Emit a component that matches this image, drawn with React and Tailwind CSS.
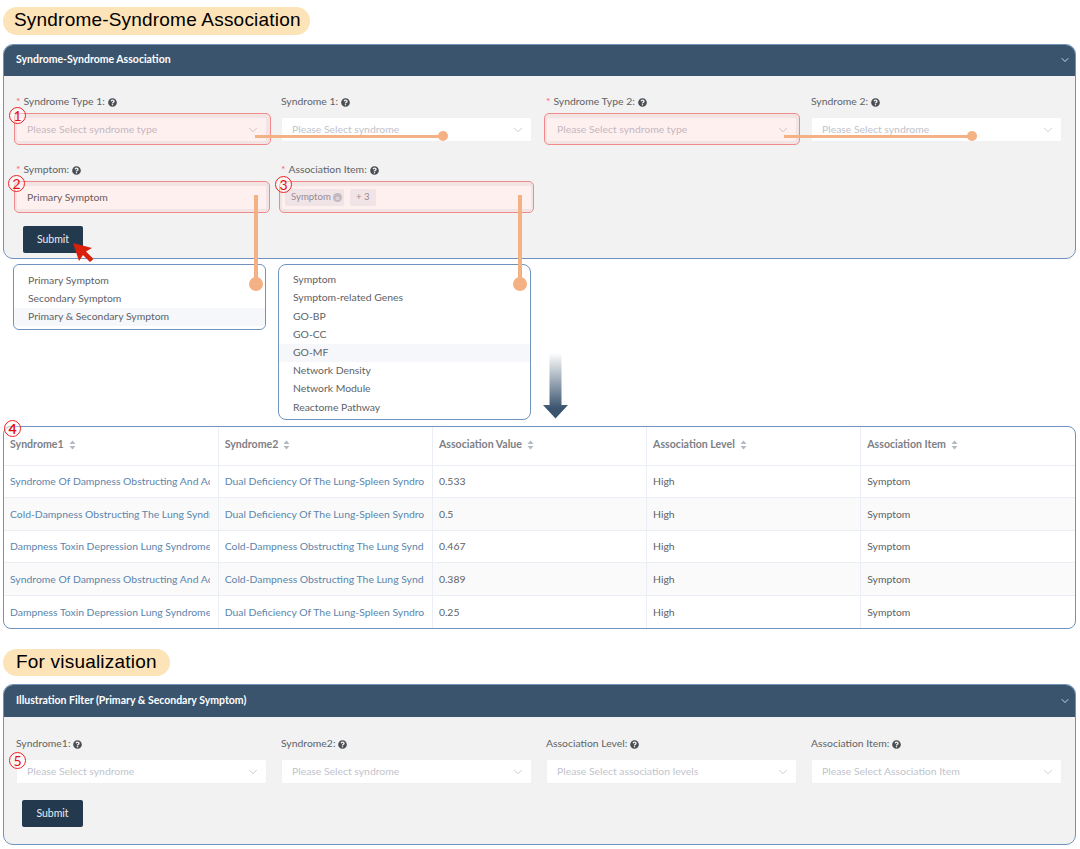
import { ChevronDown } from "lucide-react";
import { FaQuestionCircle } from "react-icons/fa";

const rows = [
  ["Syndrome Of Dampness Obstructing And Accumulating", "Dual Deficiency Of The Lung-Spleen Syndrome", "0.533"],
  ["Cold-Dampness Obstructing The Lung Syndrome", "Dual Deficiency Of The Lung-Spleen Syndrome", "0.5"],
  ["Dampness Toxin Depression Lung Syndrome", "Cold-Dampness Obstructing The Lung Syndrome", "0.467"],
  ["Syndrome Of Dampness Obstructing And Accumulating", "Cold-Dampness Obstructing The Lung Syndrome", "0.389"],
  ["Dampness Toxin Depression Lung Syndrome", "Dual Deficiency Of The Lung-Spleen Syndrome", "0.25"],
];

const columns = ["Syndrome1", "Syndrome2", "Association Value", "Association Level", "Association Item"];
const symptomOptions = ["Primary Symptom", "Secondary Symptom", "Primary & Secondary Symptom"];
const itemOptions = [
  "Symptom",
  "Symptom-related Genes",
  "GO-BP",
  "GO-CC",
  "GO-MF",
  "Network Density",
  "Network Module",
  "Reactome Pathway",
];

function SortIcon() {
  return (
    <svg width="7" height="10" viewBox="0 0 7 10" className="ml-[5px] shrink-0" fill="#b4b8bf">
      <path d="M3.5 0.5 L6.5 4 L0.5 4 Z" />
      <path d="M3.5 9.5 L6.5 6 L0.5 6 Z" />
    </svg>
  );
}

function Field({ label, required, children }) {
  return (
    <div className="flex flex-col">
      <div className="flex h-[16px] items-center text-[10.4px] text-[#606266]">
        {required && <span className="mr-[3px] text-[#f56c6c]">*</span>}
        <span>{label}:</span>
        <FaQuestionCircle className="ml-[3px] text-[9px] text-[#4a4d52]" />
      </div>
      <div className="mt-[7px]">{children}</div>
    </div>
  );
}

function Select({ placeholder, value, children }) {
  return (
    <div className="flex h-[25px] items-center justify-between rounded-[2px] border border-[#f0f1f4] bg-white pl-[10px] pr-[6px] text-[10.4px]">
      {children ? (
        <div className="flex items-center">{children}</div>
      ) : value ? (
        <span className="text-[#606266]">{value}</span>
      ) : (
        <span className="text-[#c0c4cc]">{placeholder}</span>
      )}
      {!children && !value && <ChevronDown size={14} strokeWidth={1} className="text-[#a8abb2]" />}
    </div>
  );
}

function Panel({ title, headerClass, children, className }) {
  return (
    <section className={`overflow-hidden rounded-[10px] border border-[#6f93bd] bg-[#f2f2f2] ${className}`}>
      <header className={`flex items-center justify-between bg-[#3a546e] pl-[12px] pr-[4px] text-[10.5px] font-bold text-white ${headerClass}`}>
        <span>{title}</span>
        <ChevronDown size={12} strokeWidth={1.5} className="text-white" />
      </header>
      {children}
    </section>
  );
}

function Submit({ className }) {
  return (
    <button className={`flex items-center justify-center rounded-[2px] bg-[#233a4e] text-[10.5px] text-[#e8edf2] ${className}`}>
      Submit
    </button>
  );
}

function Highlight({ className }) {
  return <div className={`absolute h-[32px] rounded-[5px] border border-[#f08a8a] bg-[#ff0000]/[0.06] ${className}`} />;
}

function Num({ n, className }) {
  return (
    <span className={`absolute flex h-[17px] w-[17px] items-center justify-center rounded-full border border-[#f02020] bg-white/40 text-[14px] leading-none text-[#e01010] ${className}`}>
      {n}
    </span>
  );
}

function Dot({ className }) {
  return <span className={`absolute rounded-full bg-[#f4b183] ${className}`} />;
}

export default function App() {
  return (
    <div className="relative h-[849px] w-[1080px] overflow-hidden bg-white pl-[3px] pr-[4px] pt-[7px] font-['Lato','Noto_Sans',sans-serif]">
      <h1 className="flex h-[28px] w-[307px] items-center whitespace-nowrap rounded-full bg-[#fde3b8] pb-[2px] pl-[11px] font-['Liberation_Sans',sans-serif] text-[19px] font-normal tracking-[0.2px] text-black">
        Syndrome-Syndrome Association
      </h1>

      <Panel title="Syndrome-Syndrome Association" headerClass="h-[31px] pb-[2px]" className="mt-[9px] h-[215px]">
        <div className="pl-[12px] pr-[13px] pt-[18px]">
          <div className="grid grid-cols-4 gap-x-[14px] gap-y-[20px]">
            <Field label="Syndrome Type 1" required><Select placeholder="Please Select syndrome type" /></Field>
            <Field label="Syndrome 1"><Select placeholder="Please Select syndrome" /></Field>
            <Field label="Syndrome Type 2" required><Select placeholder="Please Select syndrome type" /></Field>
            <Field label="Syndrome 2"><Select placeholder="Please Select syndrome" /></Field>
            <Field label="Symptom" required><Select value="Primary Symptom" /></Field>
            <Field label="Association Item" required>
              <Select>
                <span className="-ml-[7px] flex h-[17px] w-[59px] items-center justify-between rounded-[2px] bg-[#f0f2f5] pl-[6px] pr-[1px] text-[9.6px] text-[#909399]">
                  Symptom
                  <span className="mr-[1px] flex h-[9px] w-[9px] items-center justify-center rounded-full bg-[#c0c4cc] text-[8px] leading-none text-white">×</span>
                </span>
                <span className="ml-[6px] flex h-[17px] items-center rounded-[2px] bg-[#f0f2f5] px-[6px] text-[9.6px] text-[#909399]">+ 3</span>
              </Select>
            </Field>
          </div>
          <Submit className="ml-[7px] mt-[16px] h-[27px] w-[60px]" />
        </div>
      </Panel>

      <div className="mt-[5px] flex h-[156px] items-start gap-[12px] pl-[10px]">
        <ul className="h-[66px] w-[253px] overflow-hidden rounded-[6px] border border-[#6f93bd] bg-white pb-[3px] pt-[7px] text-[10.4px] text-[#606266]">
          {symptomOptions.map((o, i) => (
            <li key={o} className={`flex h-[18px] items-center pl-[14px] ${i === 2 ? "bg-[#f5f7fa]" : ""}`}>{o}</li>
          ))}
        </ul>
        <ul className="h-[156px] w-[253px] overflow-hidden rounded-[8px] border border-[#6f93bd] bg-white pb-[6px] pt-[6px] text-[10.4px] text-[#606266]">
          {itemOptions.map((o, i) => (
            <li key={o} className={`flex h-[18.2px] items-center pl-[14px] ${i === 4 ? "bg-[#f5f7fa]" : ""}`}>{o}</li>
          ))}
        </ul>
      </div>

      <div className="mt-[6px] h-[203px] overflow-hidden rounded-[8px] border border-[#6f93bd] bg-white">
        <table className="w-full table-fixed border-collapse text-[10.4px] text-[#606266]">
          <thead>
            <tr className="h-[38px] border-b border-[#ebeef5]">
              {columns.map((c) => (
                <th key={c} className="border-r border-[#ebeef5] px-[6px] pb-[2px] text-left text-[10.6px] font-bold text-[#7d8086] last:border-r-0">
                  <span className="flex items-center">{c}<SortIcon /></span>
                </th>
              ))}
            </tr>
          </thead>
          <tbody>
            {rows.map((r, i) => (
              <tr key={i} className={`h-[32.6px] border-b border-[#ebeef5] last:border-b-0 ${i % 2 === 1 ? "bg-[#fafafa]" : ""}`}>
                <td className="border-r border-[#ebeef5] pl-[6px] pr-[8px] pt-[1px] text-[#5b85ad]"><div className="overflow-hidden whitespace-nowrap">{r[0]}</div></td>
                <td className="border-r border-[#ebeef5] pl-[6px] pr-[8px] pt-[1px] text-[#5b85ad]"><div className="overflow-hidden whitespace-nowrap">{r[1]}</div></td>
                <td className="border-r border-[#ebeef5] px-[6px] pt-[1px]">{r[2]}</td>
                <td className="border-r border-[#ebeef5] px-[6px] pt-[1px]">High</td>
                <td className="px-[6px] pt-[1px]">Symptom</td>
              </tr>
            ))}
          </tbody>
        </table>
      </div>

      <h2 className="mt-[20px] flex h-[27px] w-[167px] items-center whitespace-nowrap rounded-full bg-[#fde3b8] pl-[13px] font-['Liberation_Sans',sans-serif] text-[19px] font-normal tracking-[0.2px] text-black">
        For visualization
      </h2>

      <Panel title="Illustration Filter (Primary & Secondary Symptom)" headerClass="h-[32px]" className="mt-[8px] h-[161px]">
        <div className="pl-[12px] pr-[13px] pt-[19px]">
          <div className="grid grid-cols-4 gap-x-[14px]">
            <Field label="Syndrome1"><Select placeholder="Please Select syndrome" /></Field>
            <Field label="Syndrome2"><Select placeholder="Please Select syndrome" /></Field>
            <Field label="Association Level"><Select placeholder="Please Select association levels" /></Field>
            <Field label="Association Item"><Select placeholder="Please Select Association Item" /></Field>
          </div>
          <Submit className="ml-[6px] mt-[16px] h-[27px] w-[61px]" />
        </div>
      </Panel>

      {/* annotations drawn over the page */}
      <Highlight className="left-[14px] top-[113px] w-[257px]" />
      <Highlight className="left-[544px] top-[113px] w-[256px]" />
      <Highlight className="left-[14px] top-[181px] w-[256px]" />
      <Highlight className="left-[279px] top-[181px] w-[255px]" />

      <span className="absolute left-[255px] top-[134.5px] h-[3px] w-[188px] bg-[#f4b183]" />
      <Dot className="left-[438px] top-[131px] h-[10px] w-[10px]" />
      <span className="absolute left-[784px] top-[134.5px] h-[3px] w-[188px] bg-[#f4b183]" />
      <Dot className="left-[967px] top-[131px] h-[10px] w-[10px]" />
      <span className="absolute left-[254px] top-[195px] h-[88px] w-[4px] bg-[#f4b183]" />
      <Dot className="left-[249px] top-[277px] h-[14px] w-[14px]" />
      <span className="absolute left-[518px] top-[195px] h-[88px] w-[4px] bg-[#f4b183]" />
      <Dot className="left-[513px] top-[277px] h-[14px] w-[14px]" />

      <Num n="1" className="left-[9px] top-[107px]" />
      <Num n="2" className="left-[8px] top-[175px]" />
      <Num n="3" className="left-[275px] top-[176px]" />
      <Num n="4" className="left-[4px] top-[420px] font-bold" />
      <Num n="5" className="left-[9px] top-[752px]" />

      <svg className="absolute left-[70px] top-[240px]" width="26" height="24" viewBox="0 0 26 24">
        <path d="M3 3 L22 8 L16 11.5 L23.5 19 L20 22 L13 15 L9 21 Z" fill="#d8200c" />
      </svg>

      <svg className="absolute left-[542px] top-[353px]" width="27" height="66" viewBox="0 0 27 66">
        <defs>
          <linearGradient id="down" x1="0" y1="0" x2="0" y2="1">
            <stop offset="0" stopColor="#3a546e" stopOpacity="0" />
            <stop offset="0.85" stopColor="#3a546e" />
          </linearGradient>
        </defs>
        <path d="M7.5 0 H19.5 V52 H26 L13.5 65.5 L1 52 H7.5 Z" fill="url(#down)" />
      </svg>
    </div>
  );
}
